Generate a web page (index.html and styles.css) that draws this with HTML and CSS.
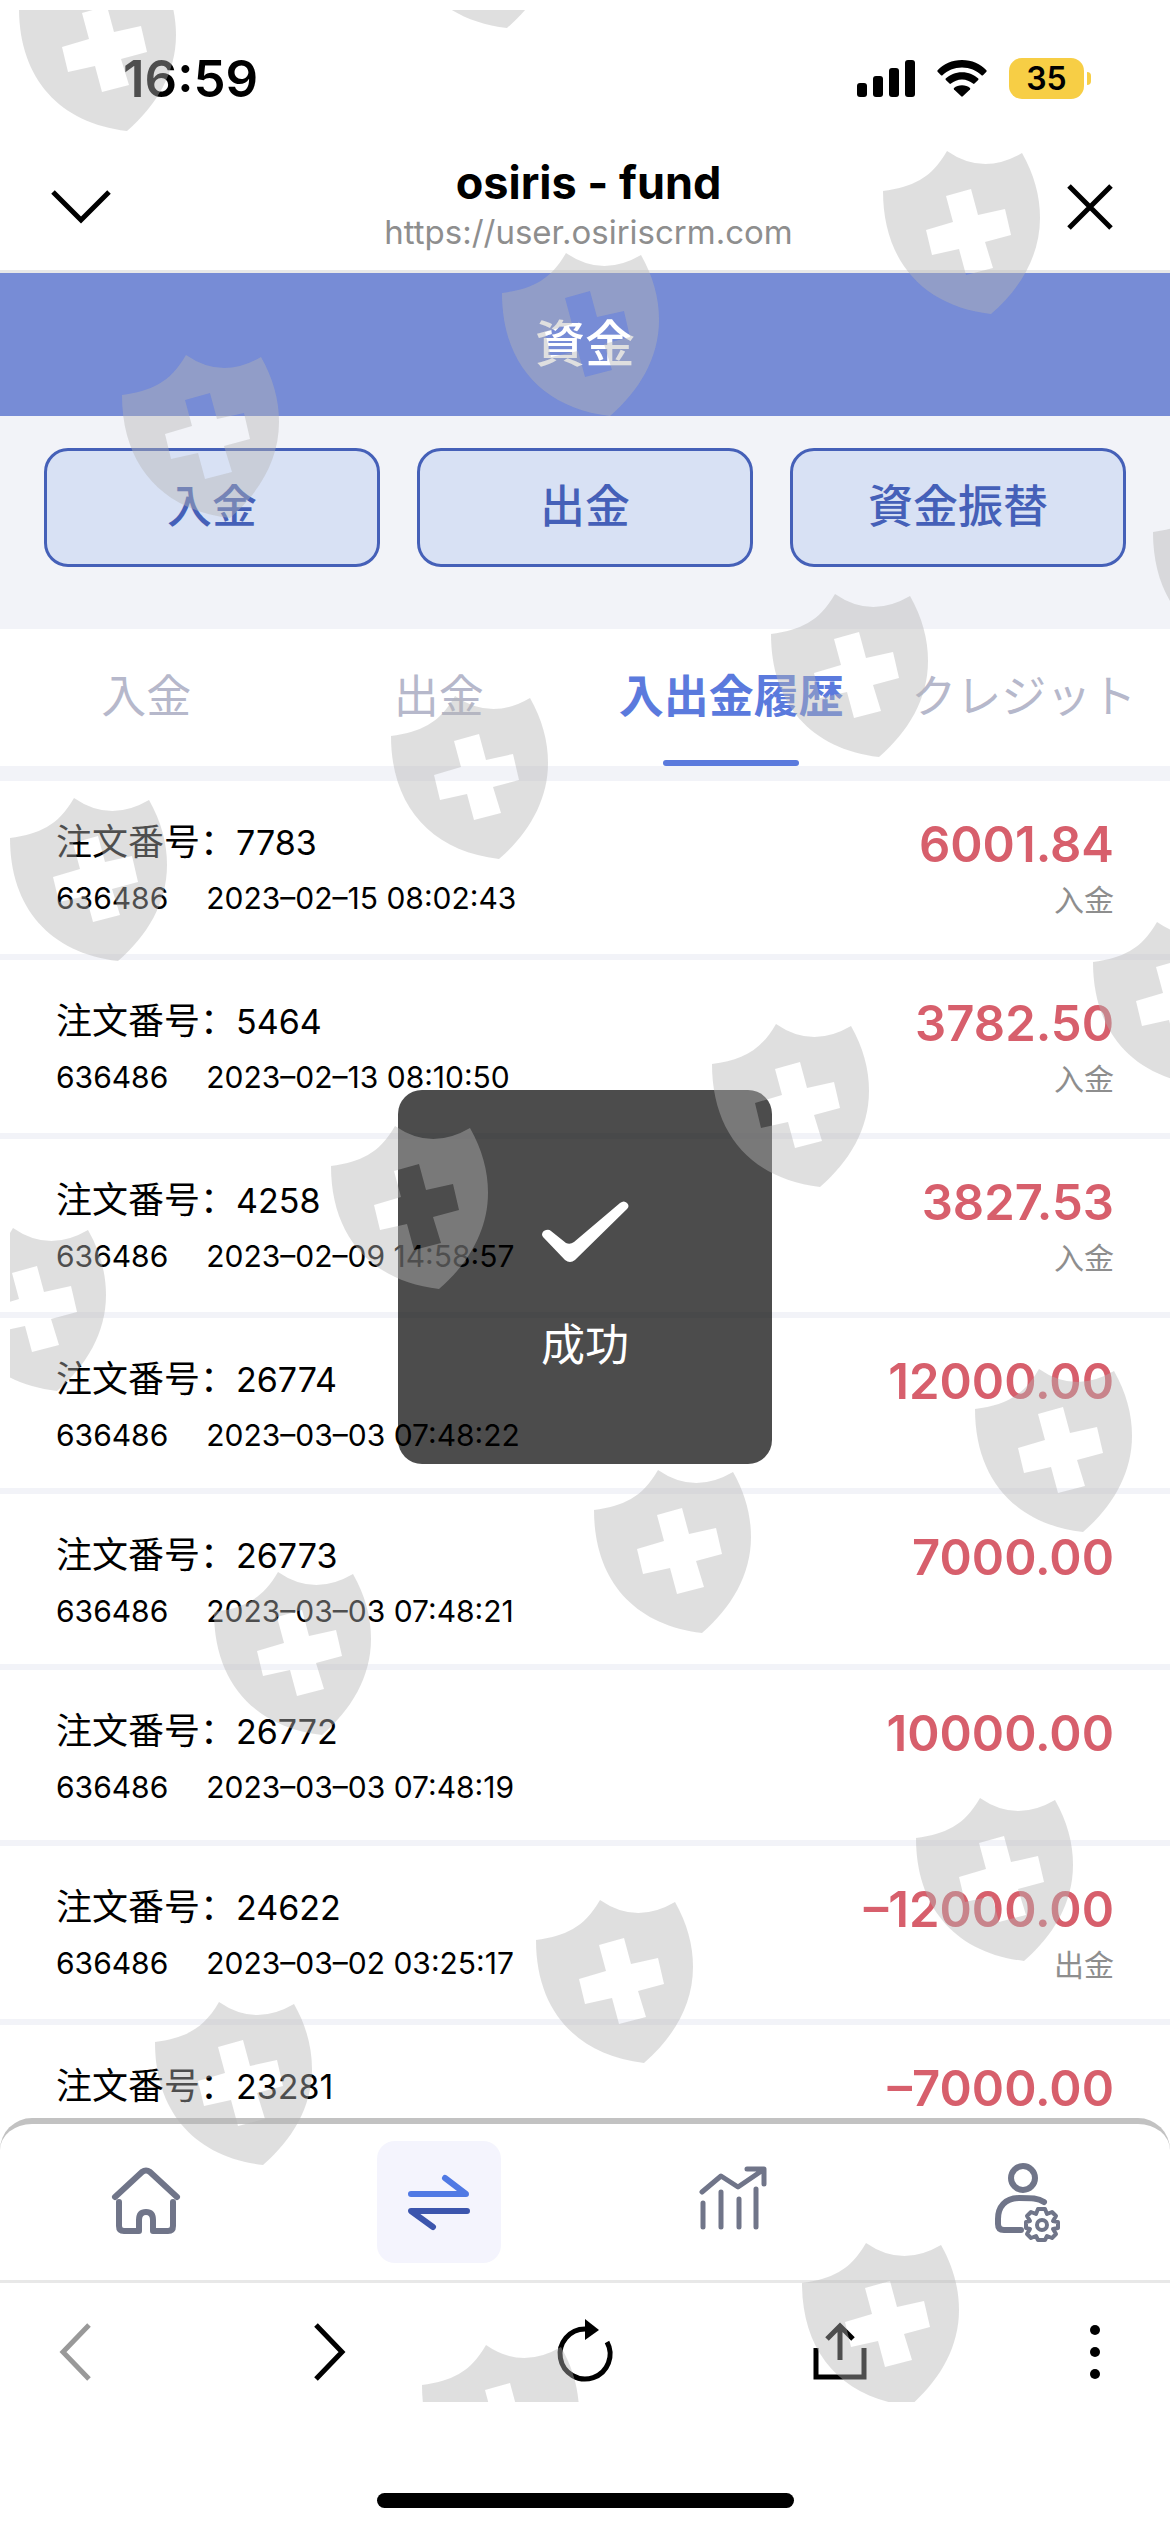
FILE: index.html
```html
<!DOCTYPE html>
<html lang="ja">
  <head>
    <meta charset="utf-8" />
    <meta name="viewport" content="width=device-width,initial-scale=1.0" />
    <title>osiris - fund</title>
    <link rel="stylesheet" href="styles.css">
  </head>
  <body>
    <div class="phone">
      <!-- status bar -->
      <div class="status">
        <span class="time">16:59</span>
        <div class="status-icons">
          <svg class="signal" viewBox="0 0 58 38" width="58" height="38">
            <rect x="0" y="24" width="10" height="14" rx="3" />
            <rect x="16" y="17" width="10" height="21" rx="3" />
            <rect x="32" y="9" width="10" height="29" rx="3" />
            <rect x="48" y="1" width="10" height="37" rx="3" />
          </svg>
          <svg class="wifi" viewBox="0 0 50 38" width="50" height="38">
            <path d="M25 1C15 1 6.500 5 0.600 11.200Q0 12 0.600 12.800L4 16.200Q4.800 16.800 5.500 16.200C10.500 11.200 17.300 8.400 25 8.400S39.500 11.200 44.500 16.200Q45.200 16.800 46 16.200L49.400 12.800Q50 12 49.400 11.200C43.500 5 35 1 25 1Z" />
            <path d="M25 13.200C18.300 13.200 12.800 15.800 8.700 19.600Q8.200 20.300 8.800 21L12.500 24.600Q13.200 25.200 14 24.600C17 22 20.700 20.400 25 20.400S33 22 36 24.600Q36.800 25.200 37.500 24.600L41.200 21Q41.800 20.300 41.300 19.600C37.200 15.800 31.700 13.200 25 13.200Z" />
            <path d="M25 26.300C21.800 26.300 19 27.300 17 29Q16.400 29.700 17 30.500L24.200 37.300Q25 38 25.800 37.300L33 30.500Q33.600 29.700 33 29C31 27.300 28.200 26.300 25 26.300Z" />
          </svg>
          <span class="battery">35</span>
        </div>
      </div>

      <!-- in-app browser header -->
      <header class="browser-head">
        <button class="icon-btn" type="button" aria-label="閉じる">
          <svg viewBox="0 0 60 48" width="60" height="48"><path d="M2 9L30 37L58 9" /></svg>
        </button>
        <div class="page-info">
          <h1 class="page-title">osiris - fund</h1>
          <div class="page-url">https://user.osiriscrm.com</div>
        </div>
        <button class="icon-btn" type="button" aria-label="終了">
          <svg viewBox="0 0 48 48" width="48" height="48"><path d="M3 3L45 45M45 3L3 45" /></svg>
        </button>
      </header>

      <main class="webview">
        <h2 class="nav-title">資金</h2>

        <div class="actions">
          <button class="action" type="button">入金</button>
          <button class="action" type="button">出金</button>
          <button class="action" type="button">資金振替</button>
        </div>

        <div class="tabs">
          <button class="tab" type="button">入金</button>
          <button class="tab" type="button">出金</button>
          <button class="tab active" type="button">入出金履歴</button>
          <button class="tab" type="button">クレジット</button>
        </div>

        <ul class="history" lang="zh-CN">
          <li class="record">
            <span class="order">注文番号：<span class="num">7783</span></span>
            <span class="amount">6001.84</span>
            <span class="meta"><span>636486</span><span>2023–02–15 08:02:43</span></span>
            <span class="type">入金</span>
          </li>
          <li class="record">
            <span class="order">注文番号：<span class="num">5464</span></span>
            <span class="amount">3782.50</span>
            <span class="meta"><span>636486</span><span>2023–02–13 08:10:50</span></span>
            <span class="type">入金</span>
          </li>
          <li class="record">
            <span class="order">注文番号：<span class="num">4258</span></span>
            <span class="amount">3827.53</span>
            <span class="meta"><span>636486</span><span>2023–02–09 14:58:57</span></span>
            <span class="type">入金</span>
          </li>
          <li class="record">
            <span class="order">注文番号：<span class="num">26774</span></span>
            <span class="amount">12000.00</span>
            <span class="meta"><span>636486</span><span>2023–03–03 07:48:22</span></span>
          </li>
          <li class="record">
            <span class="order">注文番号：<span class="num">26773</span></span>
            <span class="amount">7000.00</span>
            <span class="meta"><span>636486</span><span>2023–03–03 07:48:21</span></span>
          </li>
          <li class="record">
            <span class="order">注文番号：<span class="num">26772</span></span>
            <span class="amount">10000.00</span>
            <span class="meta"><span>636486</span><span>2023–03–03 07:48:19</span></span>
          </li>
          <li class="record">
            <span class="order">注文番号：<span class="num">24622</span></span>
            <span class="amount">–12000.00</span>
            <span class="meta"><span>636486</span><span>2023–03–02 03:25:17</span></span>
            <span class="type">出金</span>
          </li>
          <li class="record">
            <span class="order">注文番号：<span class="num">23281</span></span>
            <span class="amount">–7000.00</span>
          </li>
        </ul>

        <nav class="tabbar">
          <a class="tabbar-item" href="#" aria-label="ホーム">
            <svg viewBox="0 3 80 80" width="80" height="80">
              <path d="M9 38L36 13Q40 10 44 13L71 38" />
              <path d="M13 43V67Q13 72 18 72H33V61Q33 53 40 53Q47 53 47 61V72H62Q67 72 67 67V43" />
            </svg>
          </a>
          <a class="tabbar-item current" href="#" aria-label="資金">
            <svg viewBox="0 1 80 80" width="80" height="80">
              <path class="arrow-top" d="M12 33H67L46 17" />
              <path class="arrow-bottom" d="M68 50H12L34 66" />
            </svg>
          </a>
          <a class="tabbar-item" href="#" aria-label="取引">
            <svg class="chart" viewBox="0 3 80 80" width="80" height="80">
              <path d="M11 33L30 17L47 28L69 13M56 10H73V25" />
              <path d="M12 44V68M30 33V68M48 40V68M65 30V68" />
            </svg>
          </a>
          <a class="tabbar-item" href="#" aria-label="アカウント">
            <svg viewBox="0 3 80 80" width="80" height="80">
              <circle cx="39" cy="19" r="12" />
              <path d="M60 43C54 39 48 39 35 39C21 39 14 48 14 60V65Q14 71 20 71H37" />
              <g class="gear">
                <path d="M54 50H61L63 55L68 53L72 57L69 62L74 63V69L69 70L72 75L68 79L63 77L61 81H54L52 77L47 79L43 75L46 70L42 69V63L46 62L43 57L47 53L52 55Z" />
                <circle cx="58" cy="66" r="5" />
              </g>
            </svg>
          </a>
        </nav>

        <div class="toast" role="status">
          <svg viewBox="0 0 88 64" width="88" height="64">
            <path d="M1 35Q1 31 5 30Q8 29 10 31L25 43Q29 45 33 42L79 3Q83 0 86 3Q89 6 86 9L34 60Q29 64 24 60L2 37Z" />
          </svg>
          <span>成功</span>
        </div>
      </main>

      <!-- browser toolbar -->
      <footer class="toolbar">
        <button class="tool disabled" type="button" aria-label="戻る">
          <svg viewBox="0 0 60 60" width="60" height="60"><path d="M44 3L18 30L44 57" /></svg>
        </button>
        <button class="tool" type="button" aria-label="進む">
          <svg viewBox="0 0 60 60" width="60" height="60"><path d="M16 3L42 30L16 57" /></svg>
        </button>
        <button class="tool" type="button" aria-label="再読み込み">
          <svg viewBox="0 0 60 60" width="60" height="60">
            <path d="M30 7A25 25 0 1 0 52 20" />
            <path class="fill" d="M30 -3L44 8L30 18Z" />
          </svg>
        </button>
        <button class="tool" type="button" aria-label="共有">
          <svg viewBox="0 0 60 60" width="60" height="60">
            <path d="M6 26V55H54V26M30 38V5M17 17L30 4L43 17" />
          </svg>
        </button>
        <button class="tool" type="button" aria-label="メニュー">
          <svg viewBox="0 0 60 60" width="60" height="60">
            <g class="fill">
              <circle cx="30" cy="8" r="5" />
              <circle cx="30" cy="30" r="5" />
              <circle cx="30" cy="52" r="5" />
            </g>
          </svg>
        </button>
      </footer>
      <div class="home-indicator"></div>

      <!-- shield pattern laid over the whole screen -->
      <svg class="pattern" aria-hidden="true">
        <defs>
          <path id="shield" fill-rule="evenodd" d="M0 40C29 36 48 28 64 0Q100 25 139 2C151 23 157 45 157 67C157 105 137 138 108 163C40 155 0 110 0 40ZM63 45L88 38L95 64L122 58L128 84L102 91L110 117L83 124L76 98L49 104L43 79L70 71Z" />
        </defs>
        <use href="#shield" x="9" y="-42" />
        <use href="#shield" x="389" y="-145" />
        <use href="#shield" x="873" y="141" />
        <use href="#shield" x="492" y="243" />
        <use href="#shield" x="112" y="345" />
        <use href="#shield" x="1143" y="482" />
        <use href="#shield" x="761" y="584" />
        <use href="#shield" x="381" y="686" />
        <use href="#shield" x="0" y="788" />
        <use href="#shield" x="1083" y="912" />
        <use href="#shield" x="702" y="1014" />
        <use href="#shield" x="321" y="1116" />
        <use href="#shield" x="-61" y="1218" />
        <use href="#shield" x="965" y="1359" />
        <use href="#shield" x="584" y="1460" />
        <use href="#shield" x="204" y="1562" />
        <use href="#shield" x="906" y="1788" />
        <use href="#shield" x="526" y="1890" />
        <use href="#shield" x="145" y="1992" />
        <use href="#shield" x="792" y="2233" />
        <use href="#shield" x="412" y="2335" />
      </svg>
    </div>
  </body>
</html>
```
FILE: styles.css
```css
* {
  box-sizing: border-box;
}
body {
  margin: 0;
  background: #fff;
  color: #000;
  font-family: Inter, "Noto Sans CJK JP", sans-serif;
}
h1,
h2,
ul {
  margin: 0;
  padding: 0;
}
button {
  margin: 0;
  padding: 0;
  border: 0;
  background: none;
  color: inherit;
  font: inherit;
}
svg {
  display: block;
}
.phone {
  position: relative;
  display: flex;
  flex-direction: column;
  height: 100vh;
  overflow: hidden;
}

/* status bar */
.status {
  display: flex;
  justify-content: space-between;
  align-items: center;
  height: 156px;
  padding: 0 79px 0 123px;
}
.time {
  font-size: 51px;
  font-weight: 600;
}
.status-icons {
  display: flex;
  align-items: center;
  gap: 22px;
}
.battery {
  position: relative;
  width: 75px;
  margin-right: 7px;
  border-radius: 13px;
  background: #f7ce45;
  font-size: 32px;
  font-weight: 600;
  line-height: 41px;
  text-align: center;
}
.battery::after {
  content: "";
  position: absolute;
  top: 14px;
  right: -7px;
  width: 4px;
  height: 13px;
  border-radius: 0 5px 5px 0;
  background: #f7ce45;
}

/* browser header */
.browser-head {
  display: flex;
  justify-content: space-between;
  align-items: center;
  height: 117px;
  padding: 0 56px 12px 51px;
  border-bottom: 3px solid #e8e8e8;
}
.icon-btn path {
  fill: none;
  stroke: #000;
  stroke-width: 5;
}
.page-info {
  padding-bottom: 5px;
  text-align: center;
}
.page-title {
  font-size: 45px;
  font-weight: 700;
  line-height: 54px;
}
.page-url {
  color: #8e8e8e;
  font-size: 33px;
  line-height: 44px;
}

/* web page */
.webview {
  position: relative;
  flex: 1;
  min-height: 0;
  overflow: hidden;
}
.nav-title {
  background: #778cd6;
  color: #fff;
  font-size: 50px;
  font-weight: 500;
  line-height: 143px;
  text-align: center;
}
.actions {
  display: flex;
  gap: 37px;
  padding: 32px 44px 62px;
  background: #f2f3f8;
}
.action {
  flex: 1;
  height: 119px;
  padding-bottom: 8px;
  border: 3px solid #4560b8;
  border-radius: 24px;
  background: #d8e1f4;
  color: #4560b8;
  font-size: 45px;
  font-weight: 500;
}
.tabs {
  display: flex;
  height: 152px;
  border-bottom: 15px solid #f2f3f8;
}
.tab {
  position: relative;
  flex: 1 1 0;
  min-width: 0;
  padding-bottom: 8px;
  color: #b6b8cb;
  font-size: 45px;
  white-space: nowrap;
}
.tab.active {
  color: #5b7add;
  font-weight: 700;
}
.tab.active::after {
  content: "";
  position: absolute;
  bottom: 0;
  left: 50%;
  width: 136px;
  height: 6px;
  margin-left: -68px;
  border-radius: 3px;
  background: #5b7add;
}

/* history list */
.history {
  font-family: Inter, "Noto Sans CJK SC", sans-serif;
  list-style: none;
}
.record {
  display: grid;
  grid-template-columns: 1fr auto;
  row-gap: 3px;
  padding: 34px 56px 32px;
  border-bottom: 6px solid #f2f3f8;
}
.order {
  font-size: 36px;
  line-height: 54px;
}
.num {
  font-size: 34px;
}
.amount {
  color: #d75f6c;
  font-size: 49px;
  font-weight: 600;
  line-height: 60px;
  text-align: right;
}
.meta {
  display: flex;
  gap: 38px;
  font-size: 30px;
  line-height: 41px;
}
.type {
  color: #8e8e8e;
  font-size: 30px;
  line-height: 44px;
  text-align: right;
}

/* bottom navigation */
.tabbar {
  position: absolute;
  right: 0;
  bottom: 0;
  left: 0;
  display: flex;
  height: 162px;
  border-top: 6px solid #c2c2c2;
  border-radius: 32px 32px 0 0;
  background: #fff;
}
.tabbar-item {
  display: flex;
  flex: 1;
  justify-content: center;
  align-items: center;
}
.tabbar-item svg {
  overflow: visible;
  fill: none;
  stroke: #707589;
  stroke-width: 6;
  stroke-linecap: round;
  stroke-linejoin: round;
}
.tabbar-item svg.chart {
  stroke-width: 5;
}
.tabbar-item .gear {
  stroke-width: 4;
}
.tabbar-item.current svg {
  box-sizing: content-box;
  padding: 21px 22px;
  border-radius: 18px;
  background: #f4f4fd;
}
.tabbar-item .arrow-top {
  stroke: #5079e4;
}
.tabbar-item .arrow-bottom {
  stroke: #3c55ad;
}

.toast {
  position: absolute;
  top: 50%;
  left: 50%;
  display: flex;
  flex-direction: column;
  align-items: center;
  gap: 48px;
  width: 374px;
  height: 374px;
  padding-top: 110px;
  border-radius: 24px;
  background: rgba(0, 0, 0, 0.7);
  color: #fff;
  font-size: 44px;
  line-height: 66px;
  transform: translate(-50%, -50%);
}
.toast svg {
  fill: #fff;
}

/* browser toolbar */
.toolbar {
  display: flex;
  justify-content: space-between;
  align-items: center;
  height: 144px;
  padding: 0 45px 3px;
  border-top: 3px solid #e8e8e8;
}
.tool svg {
  overflow: visible;
  fill: none;
  stroke: #000;
  stroke-width: 5;
}
.tool.disabled svg {
  stroke: #999;
}
.tool .fill {
  fill: #000;
  stroke: none;
}
.home-indicator {
  width: 417px;
  height: 15px;
  margin: 69px auto 24px;
  border-radius: 8px;
  background: #000;
}

.pattern {
  position: absolute;
  top: 10px;
  left: 10px;
  width: calc(100% - 10px);
  height: 2392px;
  fill: rgba(180, 180, 180, 0.43);
  pointer-events: none;
}
```
